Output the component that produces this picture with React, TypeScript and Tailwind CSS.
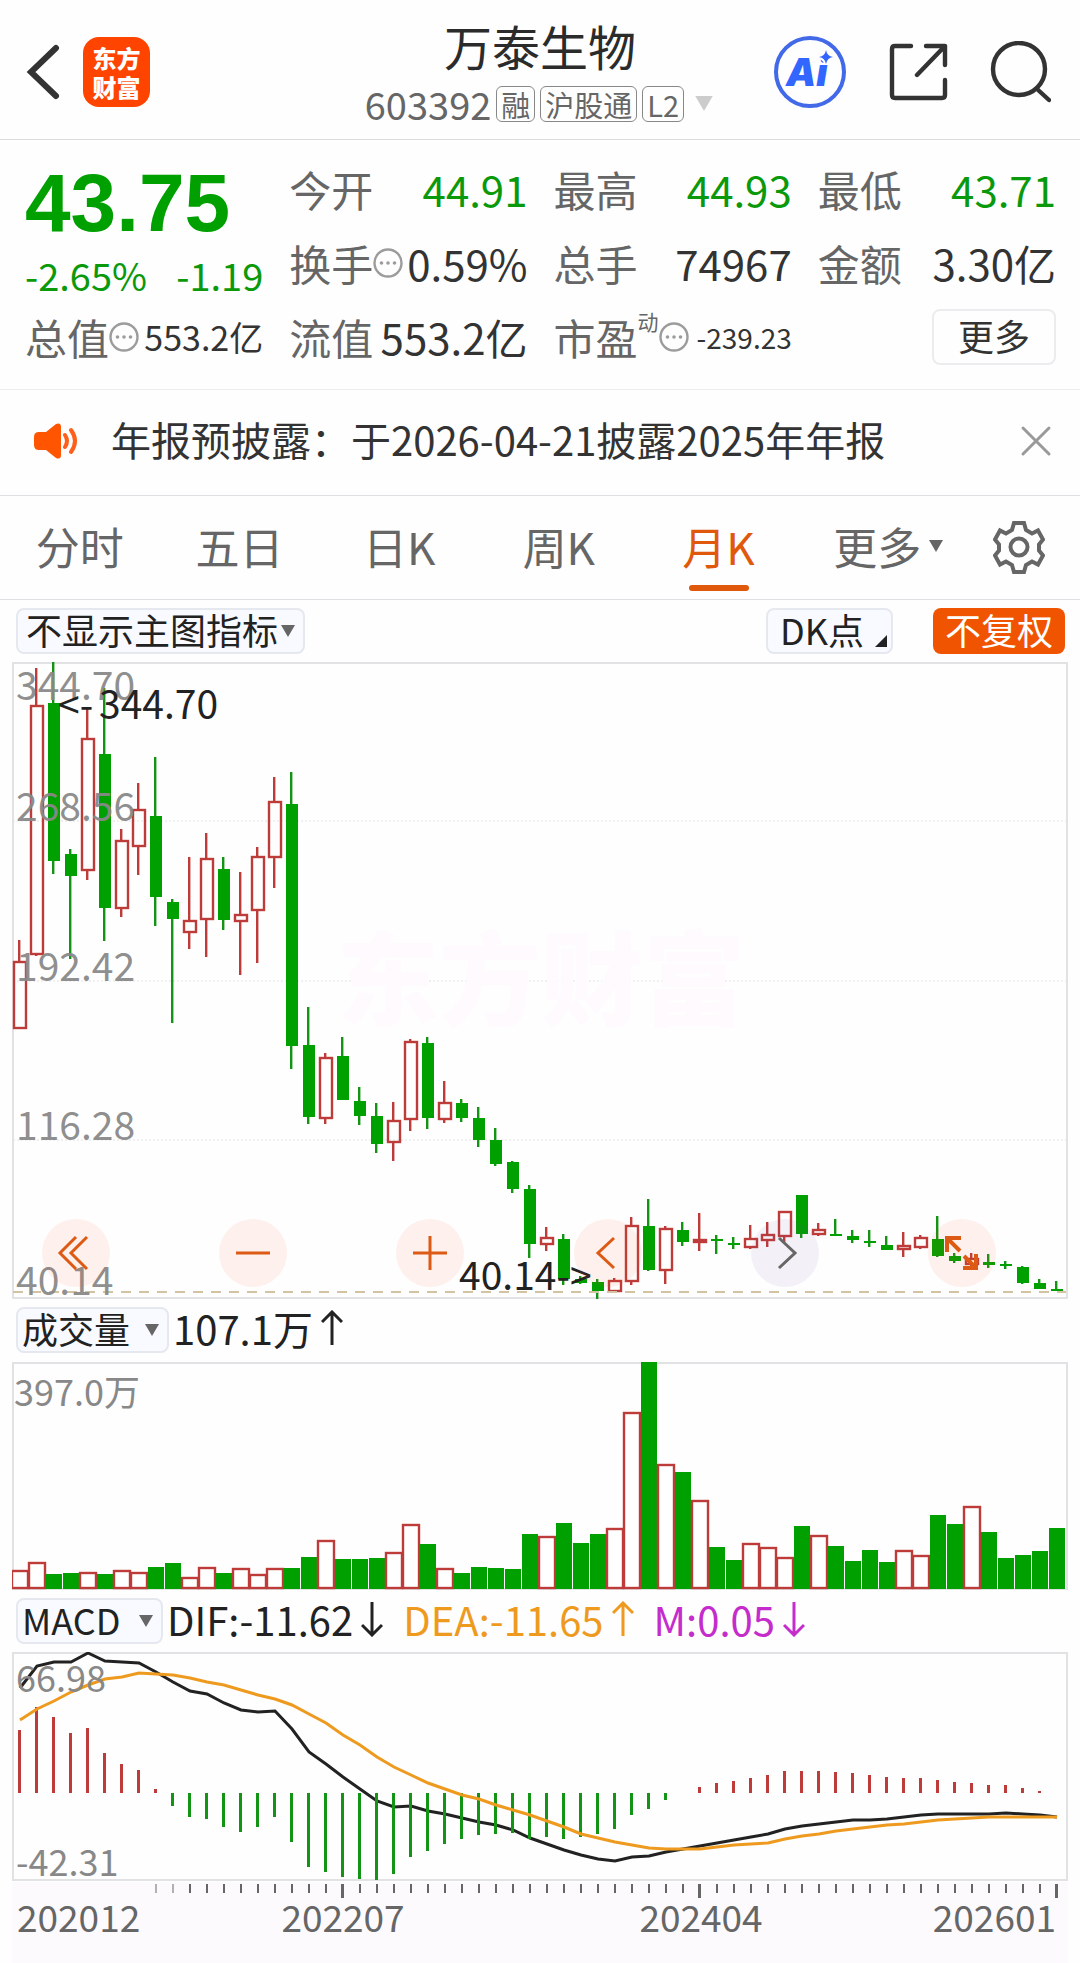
import { useState, type ReactNode } from "react";

type Candle = {
  up: boolean;
  high: number;
  top: number;
  bottom: number;
  low: number;
};

const STEP = 17;
const GREEN = "#00a000";
const GREEN_LINE = "#149414";
const RED = "#bd3c39";
const FRAME = "#e2e2e4";

// [direction, high, body top, body bottom, low] in chart units
const RAW_CANDLES: [string, number, number, number, number][] = [
  ["r", 940, 961, 1029, 1029],
  ["r", 668, 705, 955, 956],
  ["g", 662, 703, 861, 874],
  ["g", 849, 854, 876, 959],
  ["r", 709, 738, 871, 880],
  ["g", 688, 754, 908, 941],
  ["r", 829, 840, 909, 917],
  ["r", 783, 809, 847, 875],
  ["g", 757, 816, 897, 926],
  ["g", 899, 902, 919, 1023],
  ["r", 857, 920, 933, 949],
  ["r", 833, 858, 920, 957],
  ["g", 857, 869, 920, 930],
  ["r", 872, 914, 922, 975],
  ["r", 847, 856, 911, 963],
  ["r", 777, 801, 858, 888],
  ["g", 772, 804, 1046, 1069],
  ["g", 1007, 1045, 1117, 1124],
  ["r", 1053, 1057, 1119, 1124],
  ["g", 1037, 1056, 1100, 1100],
  ["g", 1087, 1101, 1116, 1125],
  ["g", 1103, 1116, 1144, 1153],
  ["r", 1102, 1120, 1143, 1161],
  ["r", 1039, 1041, 1120, 1131],
  ["g", 1037, 1043, 1118, 1129],
  ["r", 1081, 1102, 1120, 1123],
  ["g", 1099, 1103, 1118, 1122],
  ["g", 1107, 1118, 1140, 1147],
  ["g", 1128, 1140, 1164, 1166],
  ["g", 1161, 1162, 1189, 1193],
  ["g", 1185, 1189, 1244, 1258],
  ["r", 1227, 1237, 1245, 1251],
  ["g", 1234, 1239, 1279, 1285],
  ["g", 1276, 1279, 1283, 1284],
  ["g", 1279, 1282, 1291, 1299],
  ["r", 1278, 1280, 1292, 1292],
  ["r", 1217, 1225, 1282, 1285],
  ["g", 1199, 1226, 1270, 1271],
  ["r", 1226, 1228, 1271, 1284],
  ["g", 1222, 1230, 1242, 1246],
  ["r", 1213, 1239, 1243, 1251],
  ["g", 1235, 1239, 1241, 1254],
  ["g", 1237, 1243, 1245, 1249],
  ["r", 1225, 1238, 1248, 1249],
  ["r", 1222, 1234, 1241, 1247],
  ["r", 1211, 1211, 1237, 1242],
  ["g", 1195, 1195, 1234, 1238],
  ["r", 1223, 1229, 1235, 1236],
  ["g", 1219, 1234, 1236, 1236],
  ["g", 1230, 1236, 1240, 1243],
  ["g", 1230, 1241, 1243, 1247],
  ["g", 1236, 1245, 1250, 1250],
  ["r", 1232, 1245, 1250, 1257],
  ["r", 1235, 1237, 1248, 1249],
  ["g", 1216, 1239, 1256, 1257],
  ["g", 1253, 1256, 1261, 1263],
  ["r", 1253, 1258, 1265, 1268],
  ["g", 1254, 1262, 1265, 1268],
  ["g", 1261, 1264, 1266, 1269],
  ["g", 1266, 1267, 1283, 1284],
  ["g", 1279, 1283, 1289, 1289],
  ["g", 1281, 1289, 1291, 1291],
];

const CANDLES: Candle[] = RAW_CANDLES.map(([dir, high, top, bottom, low]) => ({
  up: dir === "r",
  high,
  top,
  bottom,
  low,
}));

const VOLUMES = [
  19, 27, 15, 16, 17, 15, 19, 17, 22, 26, 12, 22, 16, 21, 15, 21, 21, 32, 49, 30, 30, 31, 37, 65, 45, 21, 16, 22, 21,
  20, 55, 53, 66, 46, 55, 61, 177, 227, 125, 117, 89, 42, 29, 46, 42, 32, 63, 54, 43, 28, 39, 27, 39, 34, 74, 65, 83,
  57, 31, 34, 38, 61,
];

const MACD_BARS = [
  63, 86, 76, 60, 65, 40, 29, 23, 4, -13, -24, -26, -34, -39, -34, -24, -49, -74, -79, -84, -86, -87, -81, -64, -58,
  -51, -46, -42, -41, -40, -46, -44, -46, -44, -41, -36, -22, -16, -7, 0, 6, 10, 12, 15, 18, 22, 22, 22, 21, 20, 18, 16,
  15, 15, 13, 11, 10, 8, 8, 5, 2, 0,
];

const DIF = [
  1688, 1666, 1662, 1662, 1653, 1661, 1662, 1663, 1672, 1682, 1691, 1694, 1703, 1710, 1712, 1711, 1729, 1752, 1764,
  1777, 1789, 1801, 1807, 1806, 1811, 1814, 1818, 1822, 1825, 1830, 1838, 1844, 1850, 1855, 1859, 1861, 1857, 1856,
  1852, 1849, 1846, 1843, 1840, 1837, 1834, 1829, 1826, 1824, 1822, 1820, 1820, 1819, 1817, 1815, 1814, 1814, 1814,
  1814, 1813, 1814, 1815, 1817,
];

const DEA = [
  1720, 1709, 1701, 1692, 1685, 1679, 1677, 1673, 1674, 1675, 1678, 1682, 1685, 1690, 1695, 1699, 1705, 1714, 1723,
  1735, 1745, 1757, 1767, 1775, 1783, 1789, 1795, 1799, 1805, 1810, 1815, 1821, 1827, 1834, 1838, 1842, 1845, 1848,
  1849, 1849, 1849, 1847, 1845, 1844, 1843, 1839, 1836, 1834, 1831, 1829, 1827, 1825, 1824, 1822, 1820, 1819, 1818,
  1817, 1817, 1817, 1817, 1817,
];

const toPoints = (ys: number[]) => ys.map((y, i) => `${20 + i * STEP},${y}`).join(" ");

function Triangle({ className }: { className: string }) {
  return (
    <svg viewBox="0 0 14 12" className={className} aria-hidden="true">
      <path d="M0 0h14L7 12z" fill="currentColor" />
    </svg>
  );
}

function Arrow({ down = false }: { down?: boolean }) {
  return (
    <svg
      viewBox="0 0 22 36"
      className={`h-9 w-[22px] shrink-0 ${down ? "rotate-180" : ""}`}
      fill="none"
      stroke="currentColor"
      strokeWidth="3"
      aria-hidden="true"
    >
      <path d="M11 35V2M1 12L11 2l10 10" />
    </svg>
  );
}

function InfoDot() {
  return (
    <svg viewBox="0 0 30 30" className="h-[30px] w-[30px] shrink-0" aria-hidden="true">
      <circle cx="15" cy="15" r="13.5" fill="none" stroke="#9c9c9c" strokeWidth="2.4" />
      <circle cx="8.5" cy="15" r="1.8" fill="#9c9c9c" />
      <circle cx="15" cy="15" r="1.8" fill="#9c9c9c" />
      <circle cx="21.5" cy="15" r="1.8" fill="#9c9c9c" />
    </svg>
  );
}

function Tag({ children }: { children: ReactNode }) {
  return (
    <span className="flex h-9 items-center rounded-md border border-[#888] px-1 text-[29px] leading-8">{children}</span>
  );
}

function Header() {
  return (
    <header className="grid h-[140px] grid-cols-[1fr_auto_1fr] items-center border-b border-[#dcdcdc]">
      <div className="flex items-center gap-[23px] pt-1 pl-[26px]">
        <button aria-label="返回">
          <svg viewBox="0 0 34 56" className="h-14 w-[34px]" fill="none" stroke="#333" strokeWidth="6" strokeLinecap="round">
            <path d="M30 4L5 28l25 24" />
          </svg>
        </button>
        <a
          href="#home"
          className="flex h-[70px] w-[67px] flex-col items-center justify-center rounded-2xl bg-[#ff4400] text-2xl leading-[29px] font-black text-white"
        >
          <span>东方</span>
          <span>财富</span>
        </a>
      </div>
      <div className="flex flex-col items-center gap-1 pt-1">
        <h1 className="text-[48px] leading-[60px] text-[#2b2b2b]">万泰生物</h1>
        <button className="flex items-center gap-[5px] text-[#666]">
          <span className="text-[38px] leading-[50px]">603392</span>
          <Tag>融</Tag>
          <Tag>沪股通</Tag>
          <Tag>L2</Tag>
          <Triangle className="ml-1 h-[15px] w-[22px] text-[#ccc]" />
        </button>
      </div>
      <div className="flex items-center justify-end gap-[41px] pt-1 pr-[29px]">
        <button aria-label="Ai">
          <svg viewBox="0 0 74 74" className="h-[74px] w-[74px]">
            <circle cx="37" cy="37" r="34" fill="none" stroke="#4169e8" strokeWidth="4" />
            <text x="13" y="51" fill="#3366ff" className="font-[Inter] text-[38px] font-black italic">
              Ai
            </text>
            <path
              d="M53 15q1 6 7 7q-6 1-7 7q-1-6-7-7q6-1 7-7z"
              fill="#3366ff"
              stroke="#fff"
              strokeWidth="4"
              paintOrder="stroke"
            />
          </svg>
        </button>
        <button aria-label="分享">
          <svg viewBox="0 0 60 60" className="h-[60px] w-[60px]" fill="none" stroke="#333" strokeWidth="4.4" strokeLinecap="round" strokeLinejoin="round">
            <path d="M23 4H7Q4 4 4 7v46q0 3 3 3h47q3 0 3-3V38M38 4h19v19M57 4L29 33" />
          </svg>
        </button>
        <button aria-label="搜索">
          <svg viewBox="0 0 62 62" className="h-[62px] w-[62px]" fill="none" stroke="#333" strokeWidth="4.4" strokeLinecap="round">
            <circle cx="30" cy="28" r="26" />
            <path d="M48 48l12 11" />
          </svg>
        </button>
      </div>
    </header>
  );
}

type QuoteProps = {
  label: string;
  value: string;
  note?: string;
  info?: boolean;
  valueClass?: string;
};

function Quote({ label, value, note, info, valueClass = "text-[42px] text-[#333]" }: QuoteProps) {
  return (
    <div className="flex h-[74px] items-center justify-between">
      <dt className="flex items-center text-[42px] text-[#666]">
        {label}
        {note && <sup className="-top-4 text-[21px]">{note}</sup>}
        {info && <InfoDot />}
      </dt>
      <dd className={valueClass}>{value}</dd>
    </div>
  );
}

function QuotePanel() {
  return (
    <section className="h-[250px] border-b border-[#ececec] pt-3 pr-6 pl-[25px]">
      <dl className="grid grid-cols-4 gap-x-[26px] leading-[60px] whitespace-nowrap">
        <div className="row-span-2 text-[#0a990a]">
          <dd className="h-[98px] font-['Liberation_Sans'] text-[82px] leading-[102px] font-bold text-[#00a000]">
            43.75
          </dd>
          <dd className="flex h-[50px] items-center justify-between text-[38px]">
            <span>-2.65%</span>
            <span>-1.19</span>
          </dd>
        </div>
        <Quote label="今开" value="44.91" valueClass="text-[42px] text-[#0a990a]" />
        <Quote label="最高" value="44.93" valueClass="text-[42px] text-[#0a990a]" />
        <Quote label="最低" value="43.71" valueClass="text-[42px] text-[#0a990a]" />
        <Quote label="换手" value="0.59%" info />
        <Quote label="总手" value="74967" />
        <Quote label="金额" value="3.30亿" />
        <Quote label="总值" value="553.2亿" info valueClass="text-[34px] text-[#333]" />
        <Quote label="流值" value="553.2亿" />
        <Quote label="市盈" note="动" value="-239.23" info valueClass="text-[28px] text-[#333]" />
        <div className="flex h-[74px] items-center justify-end">
          <button className="h-14 w-[124px] rounded-lg border-2 border-[#ececef] pb-1 text-[36px] leading-[48px] text-[#333]">
            更多
          </button>
        </div>
      </dl>
    </section>
  );
}

function Announcement({ onClose }: { onClose: () => void }) {
  return (
    <section className="flex h-[106px] items-center border-b border-[#dfe0e4] pr-[28px] pb-1 pl-[33px]">
      <svg viewBox="0 0 46 38" className="h-[38px] w-[46px] shrink-0" aria-hidden="true">
        <path d="M6 10h7L23 2q5-2 5 3v28q0 5-5 3L13 28H6q-5 0-5-5v-8q0-5 5-5z" fill="#ff5500" />
        <path d="M32 13q4 6 0 12M38 8q8 11 0 22" fill="none" stroke="#ff5f1a" strokeWidth="4" strokeLinecap="round" />
      </svg>
      <a href="#notice" className="ml-8 flex-1 pb-1 text-[40px] whitespace-nowrap text-[#333]">
        年报预披露：于2026-04-21披露2025年年报
      </a>
      <button aria-label="关闭" onClick={onClose}>
        <svg viewBox="0 0 32 32" className="h-8 w-8" stroke="#999" strokeWidth="3" strokeLinecap="round">
          <path d="M3 3l26 26M29 3L3 29" />
        </svg>
      </button>
    </section>
  );
}

const TABS = ["分时", "五日", "日K", "周K", "月K", "更多"];

function PeriodTabs() {
  const [active, setActive] = useState("月K");

  return (
    <nav className="flex h-[104px] border-b border-[#dfe0e4] text-[44px] text-[#666]">
      {TABS.map((tab) => (
        <button
          key={tab}
          onClick={() => setActive(tab)}
          className={`relative flex flex-1 items-center justify-center pb-1 ${active === tab ? "text-[#e0580c]" : ""}`}
        >
          {tab === "更多" ? (
            <span className="flex items-center gap-2 pl-5">
              {tab}
              <Triangle className="h-3 w-3.5" />
            </span>
          ) : (
            tab
          )}
          {active === tab && <span className="absolute bottom-2 h-1.5 w-[60px] rounded-full bg-[#e0580c]" />}
        </button>
      ))}
      <button aria-label="设置" className="flex w-[122px] items-center justify-center pb-0.5">
        <svg viewBox="0 0 52 54" className="h-[54px] w-[52px]" fill="none" stroke="#666" strokeWidth="4">
          <path d="M21 3h10l2 7 6 3.500 6-3 5 9-4 5v6l4 5-5 9-6-3-6 3.500-2 7H21l-2-7-6-3.500-6 3-5-9 4-5v-6l-4-5 5-9 6 3 6-3.500z" />
          <circle cx="26" cy="27" r="8.500" />
        </svg>
      </button>
    </nav>
  );
}

function IndicatorSelect({ label, options, pad }: { label: string; options: string[]; pad: string }) {
  return (
    <div className="relative flex items-center">
      <select
        aria-label={label}
        className={`h-[46px] appearance-none rounded-lg border-2 border-[#e6e8f0] bg-[#f8faff] pb-1 text-[36px] leading-[38px] text-[#222] ${pad}`}
      >
        {options.map((option) => (
          <option key={option}>{option}</option>
        ))}
      </select>
      <Triangle className="pointer-events-none absolute right-2.5 h-3 w-3.5 text-[#666]" />
    </div>
  );
}

function CandleShape({ candle, index }: { candle: Candle; index: number }) {
  const x = 19 + index * STEP;
  const height = candle.bottom - candle.top;

  if (!candle.up) {
    return (
      <g fill={GREEN}>
        <rect x={x - 1} y={candle.high} width="2.4" height={candle.low - candle.high} fill={GREEN_LINE} />
        <rect x={x - 5} y={candle.top} width="12" height={Math.max(height, 2)} />
      </g>
    );
  }
  return (
    <g fill={RED}>
      <rect x={x - 1} y={candle.high} width="2.4" height={candle.top - candle.high} />
      <rect x={x - 1} y={candle.bottom} width="2.4" height={candle.low - candle.bottom} />
      <rect
        x={x - 5}
        y={candle.top + 1}
        width="12"
        height={Math.max(height - 2, 1)}
        fill="none"
        stroke={RED}
        strokeWidth="2.4"
      />
    </g>
  );
}

const PRICE_LABELS: [string, number][] = [
  ["344.70", 700],
  ["268.56", 821],
  ["192.42", 981],
  ["116.28", 1140],
  ["40.14", 1295],
];

function RoundButton({ label, children, muted }: { label: string; children: ReactNode; muted?: boolean }) {
  return (
    <button
      aria-label={label}
      className={`flex h-[68px] w-[68px] items-center justify-center rounded-full ${
        muted ? "bg-[#6b3fa0]/7 text-[#666]" : "bg-[#ff5014]/8 text-[#dc5a14]"
      }`}
    >
      <svg viewBox="0 0 40 40" className="h-10 w-10" fill="none" stroke="currentColor" strokeWidth="3">
        {children}
      </svg>
    </button>
  );
}

function PriceChart() {
  return (
    <div className="relative mx-3">
      <svg viewBox="12 662 1056 638" className="block w-full" role="img" aria-label="月K线图">
        <rect x="13" y="663" width="1054" height="635" fill="none" stroke={FRAME} strokeWidth="2" />
        {[821, 981, 1140].map((y) => (
          <path key={y} d={`M13 ${y}H1066`} stroke="#e2e2e2" strokeDasharray="2 2" />
        ))}
        <text x="541" y="1018" textAnchor="middle" fill="#fefafe" className="text-[102px] font-black">
          东方财富
        </text>
        {CANDLES.map((candle, i) => (
          <CandleShape key={i} candle={candle} index={i} />
        ))}
        <path d="M13 1292H1066" stroke="#d3c3a2" strokeWidth="2" strokeDasharray="10 8" />
        <g fill="#888" fillOpacity="0.95" className="text-[39px]">
          {PRICE_LABELS.map(([text, y]) => (
            <text key={text} x="16" y={y}>
              {text}
            </text>
          ))}
        </g>
        <g fill="#222" className="text-[39px]">
          <text y="719">
            <tspan x="58">&lt;-</tspan>
            <tspan x="99">344.70</tspan>
          </text>
          <text x="459" y="1290">
            40.14-&gt;
          </text>
        </g>
      </svg>
      <div className="absolute inset-x-0 bottom-[13px] flex justify-between pr-[72px] pl-[30px]">
        <RoundButton label="最早">
          <path d="M20 4L4 20l16 16M31 4L15 20l16 16" />
        </RoundButton>
        <RoundButton label="缩小">
          <path d="M3 20h34" />
        </RoundButton>
        <RoundButton label="放大">
          <path d="M3 20h34M20 3v34" />
        </RoundButton>
        <RoundButton label="向左">
          <path d="M26 5L10 20l16 15" />
        </RoundButton>
        <RoundButton label="向右" muted>
          <path d="M14 5l16 15-16 15" />
        </RoundButton>
        <RoundButton label="全屏">
          <path strokeWidth="4" d="M5 19V5h14M5 5l13 13M22 23l12 12M21 35h13V21" />
        </RoundButton>
      </div>
    </div>
  );
}

function VolumeChart() {
  return (
    <svg viewBox="12 1362 1056 228" className="mx-3 block w-[calc(100%-24px)]" role="img" aria-label="成交量">
      <rect x="13" y="1363" width="1054" height="226" fill="none" stroke={FRAME} strokeWidth="2" />
      {VOLUMES.map((v, i) =>
        CANDLES[i].up ? (
          <rect
            key={i}
            x={12 + i * STEP}
            y={1590 - v}
            width="16"
            height={v - 2}
            fill="#fff"
            stroke={RED}
            strokeWidth="2.4"
          />
        ) : (
          <rect key={i} x={12 + i * STEP} y={1589 - v} width="16" height={v} fill={GREEN} />
        ),
      )}
      <text x="14" y="1406" fill="#888" className="text-[36px]">
        397.0万
      </text>
    </svg>
  );
}

function MacdChart() {
  return (
    <svg viewBox="12 1652 1056 230" className="mx-3 block w-[calc(100%-24px)]" role="img" aria-label="MACD">
      <rect x="13" y="1653" width="1054" height="227" fill="none" stroke={FRAME} strokeWidth="2" />
      <polyline points={toPoints(DIF)} fill="none" stroke="#222" strokeWidth="3" />
      {MACD_BARS.map((v, i) => (
        <rect
          key={i}
          x={18 + i * STEP}
          y={v > 0 ? 1793 - v : 1793}
          width="3"
          height={Math.abs(v)}
          fill={v > 0 ? RED : GREEN_LINE}
        />
      ))}
      <polyline points={toPoints(DEA)} fill="none" stroke="#ee9a1f" strokeWidth="3" />
      <g fill="#888" className="text-[36px]">
        <text x="16" y="1692">
          66.98
        </text>
        <text x="16" y="1876">
          -42.31
        </text>
      </g>
    </svg>
  );
}

const MAJOR_TICKS = [19, 40, 61];

function DateAxis() {
  return (
    <svg viewBox="12 1882 1056 81" className="mx-3 block w-[calc(100%-24px)] bg-[#fdfafe]" role="img" aria-label="日期">
      {CANDLES.map((_, i) => {
        if (i < 8) return null;
        const major = MAJOR_TICKS.includes(i);
        return (
          <rect
            key={i}
            x={19 + i * STEP - (major ? 1 : 0)}
            y="1884"
            width={major ? 3 : 2}
            height={major ? 14 : 9}
            fill="#666"
            opacity={i < 10 ? 0.5 : 1}
          />
        );
      })}
      <g fill="#666" className="text-[37px]">
        <text x="17" y="1932">
          202012
        </text>
        <text x="343" y="1932" textAnchor="middle">
          202207
        </text>
        <text x="701" y="1932" textAnchor="middle">
          202404
        </text>
        <text x="1056" y="1932" textAnchor="end">
          202601
        </text>
      </g>
    </svg>
  );
}

export default function App() {
  const [showNotice, setShowNotice] = useState(true);

  return (
    <main className="w-full bg-[#fefefe] font-['Noto_Sans_CJK_SC',sans-serif]">
      <Header />
      <QuotePanel />
      {showNotice && <Announcement onClose={() => setShowNotice(false)} />}
      <PeriodTabs />

      <div className="flex h-[62px] items-center pr-[15px] pl-4">
        <IndicatorSelect label="主图指标" options={["不显示主图指标"]} pad="pl-2 pr-6" />
        <button className="ml-auto flex h-[46px] w-[127px] items-center justify-between rounded-lg border-2 border-[#e6e8f0] bg-[#f8faff] pr-1 pb-1 pl-3 text-[36px] leading-[38px] whitespace-nowrap text-[#222]">
          DK点
          <svg viewBox="0 0 12 12" className="mt-6 h-3 w-3" aria-hidden="true">
            <path d="M12 0v12H0z" fill="#222" />
          </svg>
        </button>
        <button className="ml-10 h-[46px] w-[132px] rounded-lg bg-[#f05400] pb-1 text-[36px] leading-[42px] text-white">
          不复权
        </button>
      </div>
      <PriceChart />

      <div className="flex h-[62px] items-center gap-1 pb-0.5 pl-4 text-[40px] text-[#222]">
        <IndicatorSelect label="副图指标一" options={["成交量"]} pad="pl-1 pr-9" />
        <span className="flex items-center gap-2 pb-1">
          107.1万
          <Arrow />
        </span>
      </div>
      <VolumeChart />

      <div className="flex h-[62px] items-center gap-1 pl-4 text-[40px] whitespace-nowrap">
        <IndicatorSelect label="副图指标二" options={["MACD"]} pad="pl-1 pr-10" />
        <span className="flex items-center gap-2 pb-1 text-[#222]">
          DIF:-11.62
          <Arrow down />
        </span>
        <span className="ml-4 flex items-center gap-2 pb-1 text-[#ee9a1f]">
          DEA:-11.65
          <Arrow />
        </span>
        <span className="ml-4 flex items-center gap-2 pb-1 text-[#c42ccb]">
          M:0.05
          <Arrow down />
        </span>
      </div>
      <MacdChart />
      <DateAxis />
    </main>
  );
}
